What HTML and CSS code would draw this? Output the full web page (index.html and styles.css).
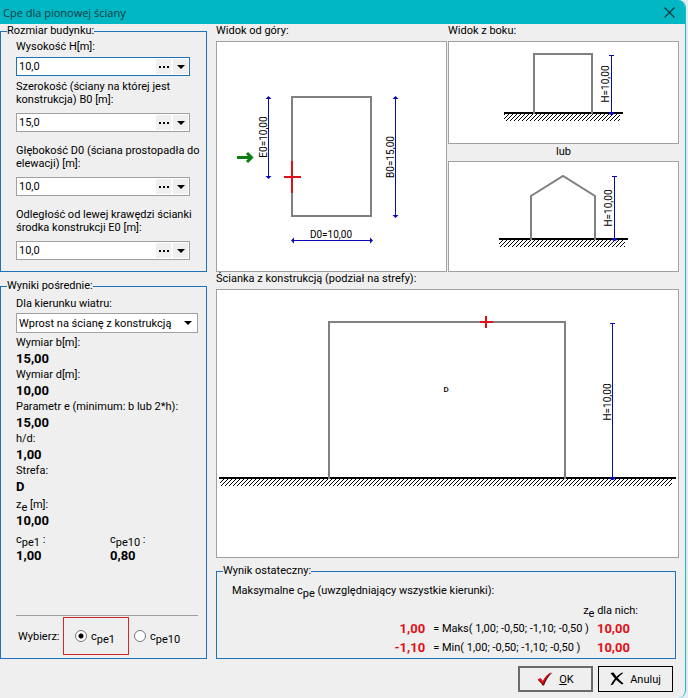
FILE: index.html
```
<!DOCTYPE html>
<html lang="pl">
<head>
  <meta charset="utf-8">
  <title>Cpe dla pionowej ściany</title>
  <link rel="stylesheet" href="styles.css">
</head>
<body>
  <div class="window">
    <header class="titlebar">
      <h1>Cpe dla pionowej ściany</h1>
      <button class="close" aria-label="Zamknij">
        <svg width="11" height="11" viewBox="0 0 11 11"><path d="M0.5 0.5L10.5 10.5M10.5 0.5L0.5 10.5" stroke="#12383c" stroke-width="1.2"/></svg>
      </button>
    </header>

    <main class="content">
      <div class="sidebar">
        <fieldset class="group size-group">
          <legend>Rozmiar budynku:</legend>
          <div class="field compact">
            <label for="height">Wysokość H[m]:</label>
            <div class="number active">
              <input id="height" type="text" value="10,0">
              <button class="more" aria-label="Kalkulator"></button>
              <button class="arrow" aria-label="Lista"></button>
            </div>
          </div>
          <div class="field">
            <label for="width">Szerokość (ściany na której jest konstrukcja) B0 [m]:</label>
            <div class="number">
              <input id="width" type="text" value="15,0">
              <button class="more" aria-label="Kalkulator"></button>
              <button class="arrow" aria-label="Lista"></button>
            </div>
          </div>
          <div class="field">
            <label for="depth">Głębokość D0 (ściana prostopadła do elewacji) [m]:</label>
            <div class="number">
              <input id="depth" type="text" value="10,0">
              <button class="more" aria-label="Kalkulator"></button>
              <button class="arrow" aria-label="Lista"></button>
            </div>
          </div>
          <div class="field">
            <label for="distance">Odległość od lewej krawędzi ścianki środka konstrukcji E0 [m]:</label>
            <div class="number">
              <input id="distance" type="text" value="10,0">
              <button class="more" aria-label="Kalkulator"></button>
              <button class="arrow" aria-label="Lista"></button>
            </div>
          </div>
        </fieldset>

        <fieldset class="group partial-group">
          <legend>Wyniki pośrednie:</legend>
          <label for="wind">Dla kierunku wiatru:</label>
          <div class="select">
            <select id="wind">
              <option>Wprost na ścianę z konstrukcją</option>
            </select>
          </div>
          <dl class="values">
            <dt>Wymiar b[m]:</dt>
            <dd>15,00</dd>
            <dt>Wymiar d[m]:</dt>
            <dd>10,00</dd>
            <dt>Parametr e (minimum: b lub 2*h):</dt>
            <dd>15,00</dd>
            <dt>h/d:</dt>
            <dd>1,00</dd>
            <dt>Strefa:</dt>
            <dd>D</dd>
          </dl>
          <dl class="values indexed">
            <dt>z<sub>e</sub> [m]:</dt>
            <dd>10,00</dd>
          </dl>
          <div class="pair">
            <dl class="values indexed">
              <dt>c<sub>pe1</sub> :</dt>
              <dd>1,00</dd>
            </dl>
            <dl class="values indexed">
              <dt>c<sub>pe10</sub> :</dt>
              <dd>0,80</dd>
            </dl>
          </div>
          <div class="choice">
            <span class="choice-title">Wybierz:</span>
            <label class="radio marked"><input type="radio" name="cpe" checked><span>c<sub>pe1</sub></span></label>
            <label class="radio"><input type="radio" name="cpe"><span>c<sub>pe10</sub></span></label>
          </div>
        </fieldset>
      </div>

      <div class="views">
        <div class="top-views">
          <section class="view">
            <h2>Widok od góry:</h2>
            <div class="panel">
              <svg viewBox="0 0 229 229">
                <defs>
                  <pattern id="hatch" width="4" height="4" patternUnits="userSpaceOnUse">
                    <path d="M-1 5L5 -1M-1 1L1 -1M3 5L5 3" stroke="#000" stroke-width="1"/>
                  </pattern>
                </defs>
                <rect class="wall" x="75" y="55" width="79" height="119"/>
                <path class="dim" d="M51.5 55V136M178.5 55V175M75 198.5H155"/>
                <path class="tip" d="M51.5 54l3 3h-6zM51.5 137l3-3h-6zM178.5 54l3 3h-6zM178.5 176l3-3h-6zM74 198.5l3-3v6zM156 198.5l-3-3v6z"/>
                <path class="mark" d="M67 135H84M75 119V151"/>
                <path d="M20 115.5H35M30 111l4.5 4.5l-4.5 4.5" fill="none" stroke="#0a7d10" stroke-width="3"/>
                <text class="dim-text" x="114" y="196">D0=10,00</text>
                <text class="dim-text" transform="translate(50 95) rotate(-90)">E0=10,00</text>
                <text class="dim-text" transform="translate(177 115) rotate(-90)">B0=15,00</text>
              </svg>
            </div>
          </section>
          <section class="view">
            <h2>Widok z boku:</h2>
            <div class="panel">
              <svg viewBox="0 0 229 101">
                <rect x="55" y="72" width="116" height="7" fill="url(#hatch)"/>
                <path class="ground" d="M55 71H174"/>
                <path class="wall" d="M85 72V12H143V72"/>
                <path class="dim" d="M162.5 13V71M160 13.5h5"/>
                <path class="tip" d="M160 70h5v2l-2 1h-1l-2-1z"/>
                <text class="dim-text" transform="translate(160 42) rotate(-90)">H=10,00</text>
              </svg>
            </div>
            <p class="or">lub</p>
            <div class="panel">
              <svg viewBox="0 0 229 109">
                <rect x="50" y="78" width="126" height="7" fill="url(#hatch)"/>
                <path class="ground" d="M50 77H179"/>
                <path class="wall" d="M82 78V34L114 14L146 34V78"/>
                <path class="dim" d="M165.5 14V77M163 14.5h5"/>
                <path class="tip" d="M163 76h5v2l-2 1h-1l-2-1z"/>
                <text class="dim-text" transform="translate(163 46) rotate(-90)">H=10,00</text>
              </svg>
            </div>
          </section>
        </div>

        <section class="view">
          <h2>Ścianka z konstrukcją (podział na strefy):</h2>
          <div class="panel">
            <svg viewBox="0 0 461 267">
              <rect x="3" y="189" width="452" height="7" fill="url(#hatch)"/>
              <path class="ground" d="M2 188H459"/>
              <path class="wall" d="M112 189V32H348V189"/>
              <path class="mark" d="M263 32H276M269 26V38"/>
              <path class="dim" d="M395.5 33V188M393 33.5h5"/>
              <path class="tip" d="M393 187h5v2l-2 1h-1l-2-1z"/>
              <text class="zone-text" x="229" y="102">D</text>
              <text class="dim-text" transform="translate(394 112) rotate(-90)">H=10,00</text>
            </svg>
          </div>
        </section>

        <fieldset class="group final-group">
          <legend>Wynik ostateczny:</legend>
          <p>Maksymalne c<sub>pe</sub> (uwzględniający wszystkie kierunki):</p>
          <table class="results">
            <thead>
              <tr><td></td><th colspan="2" scope="col">z<sub>e</sub> dla nich:</th></tr>
            </thead>
            <tbody>
              <tr>
                <td class="result">1,00</td>
                <td>= Maks( 1,00; -0,50; -1,10; -0,50 )</td>
                <td class="result">10,00</td>
              </tr>
              <tr>
                <td class="result">-1,10</td>
                <td>= Min( 1,00; -0,50; -1,10; -0,50 )</td>
                <td class="result">10,00</td>
              </tr>
            </tbody>
          </table>
        </fieldset>
      </div>
    </main>

    <footer class="actions">
      <button class="btn btn-default">
        <svg width="16" height="14" viewBox="0 0 16 14"><path d="M1 8.5L4 7L6 9.5C8 5.5 11 2 15.5 0.5C11.5 4 9 8 7 13.5H5.5C4.5 11.5 3 9.5 1 8.5Z" fill="#5a0a0a"/><path d="M0.5 7.5L3.5 6L5.7 9C8 4.5 11 1.5 14.5 0.2C11 3.5 8 7.5 6 12.5C4.5 10.5 3 8.5 0.5 7.5Z" fill="#e01018"/></svg>
        <span><u>O</u>K</span>
      </button>
      <button class="btn">
        <svg width="14" height="14" viewBox="0 0 14 14"><path d="M0.5 1L3.5 0.5C6 4 9 8 13.5 11.5L12 12.5C8 10 4 6 0.5 1Z" fill="#000"/><path d="M12 0.5L13.2 1C9 4 5.5 8 3 12.5L0.5 13.2C3 8 7 3.5 12 0.5Z" fill="#000"/></svg>
        <span>Anuluj</span>
      </button>
    </footer>
  </div>
</body>
</html>
```
FILE: styles.css
```
* {
  margin: 0;
  padding: 0;
  box-sizing: border-box;
}

body {
  font-family: Roboto, "Liberation Sans", sans-serif;
  font-size: 11px;
  line-height: 13px;
  color: #000;
  background: #e1edf0;
}

button, input, select {
  font: inherit;
  color: inherit;
}

h1, h2, th {
  font-size: inherit;
  font-weight: normal;
}

.window {
  min-height: 100vh;
  margin-right: 2px;
  background: #efefef;
  border-right: 1px solid #20b4bd;
  border-radius: 0 8px 8px 0;
  overflow: hidden;
}

.titlebar {
  display: flex;
  align-items: center;
  justify-content: space-between;
  height: 24px;
  padding: 0 10px 0 3px;
  background: #00b7c3;
  color: #0b3a40;
  font-family: "Open Sans", sans-serif;
}

.close {
  display: flex;
  background: none;
  border: none;
}

.content {
  display: grid;
  grid-template-columns: 207px 1fr;
  gap: 9px;
  padding-right: 6px;
}

/* group boxes */
.group {
  min-width: 0;
  border: 1px solid #1e72b8;
}

.group legend {
  margin-left: -9px;
  line-height: 14px;
}

.sidebar {
  display: flex;
  flex-direction: column;
  gap: 7px;
}

.size-group {
  padding: 2px 2px 11px 15px;
}

.field {
  margin-bottom: 12px;
}

.field:last-child {
  margin-bottom: 0;
}

.field label {
  display: block;
  margin-bottom: 7px;
}

.field.compact {
  margin-bottom: 4px;
}

.field.compact label {
  margin-bottom: 4px;
}

.number {
  display: flex;
  align-items: center;
  gap: 2px;
  height: 19px;
  margin-right: 14px;
  padding-right: 1px;
  background: #fff;
  border: 1px solid #a0a0a0;
}

.number.active {
  border-color: #1e72b8;
}

.number input {
  flex: 1;
  min-width: 0;
  padding-left: 2px;
  border: none;
  outline: none;
  background: none;
}

.number button {
  display: flex;
  align-items: center;
  justify-content: center;
  width: 15px;
  height: 15px;
  background: #efefef;
  border: none;
}

.more::before {
  content: "";
  width: 10px;
  height: 2px;
  background: repeating-linear-gradient(90deg, #000 0 2px, transparent 2px 4px);
}

.arrow::before,
.select::after {
  content: "";
  border: 4px solid transparent;
  border-top-color: #000;
  border-bottom: none;
}

.partial-group {
  flex: 1;
  display: flex;
  flex-direction: column;
  padding: 4px 8px 3px 15px;
}

.select {
  display: flex;
  align-items: center;
  height: 20px;
  margin: 3px 0 2px;
  padding-right: 5px;
  background: #fff;
  border: 1px solid #a0a0a0;
}

.select select {
  flex: 1;
  min-width: 0;
  padding-left: 2px;
  appearance: none;
  background: none;
  border: none;
  outline: none;
}

.values {
  line-height: 16px;
}

.values dd {
  font-size: 13px;
  font-weight: bold;
}

.values.indexed {
  margin-top: 2px;
}

sub {
  font-size: 11px;
  line-height: 0;
  vertical-align: -3px;
}

.pair {
  display: grid;
  grid-template-columns: 1fr 1fr;
  gap: 6px;
  margin-top: 1px;
}

.choice {
  display: flex;
  align-items: center;
  margin-top: auto;
  padding-top: 1px;
  border-top: 1px solid #a0a0a0;
}

.choice-title {
  width: 47px;
  padding-left: 2px;
}

.radio {
  display: flex;
  align-items: center;
  gap: 4px;
  height: 38px;
  padding: 0 5px;
}

.radio.marked {
  width: 66px;
  padding: 0 11px;
  border: 1px solid #d0282c;
}

.radio input {
  width: 12px;
  height: 12px;
  appearance: none;
  background: #fff;
  border: 1px solid #777;
  border-radius: 50%;
}

.radio input:checked {
  background: radial-gradient(circle, #000 0 2px, #fff 3px);
}

/* drawings */
.top-views {
  display: grid;
  grid-template-columns: 1fr 1fr;
  gap: 1px;
}

.view h2 {
  padding-bottom: 3px;
  line-height: 14px;
}

.panel {
  background: #fff;
  border: 1px solid #a0a0a0;
}

.panel svg {
  display: block;
  width: 100%;
  height: auto;
}

.or {
  padding: 1px 0 2px;
  text-align: center;
  line-height: 14px;
}

.wall {
  fill: none;
  stroke: #808080;
  stroke-width: 2;
}

.ground {
  stroke: #000;
  stroke-width: 2;
}

.dim {
  stroke: #0808b8;
}

.tip {
  fill: #0808b8;
}

.mark {
  stroke: #e01018;
  stroke-width: 2;
}

.dim-text {
  font-size: 10px;
  text-anchor: middle;
}

.zone-text {
  font-size: 8px;
  font-weight: 500;
  text-anchor: middle;
}

/* final result */
.final-group {
  margin: 6px 3px 0 0;
  padding: 6px 8px 1px 15px;
}

.results {
  margin: 5px 29px 0 auto;
  border-collapse: collapse;
}

.results th {
  height: 17px;
  text-align: right;
}

.results td {
  padding-right: 8px;
  white-space: nowrap;
}

.results tbody td {
  height: 19px;
}

.results .result {
  color: #e01018;
  font-size: 13px;
  font-weight: bold;
  text-align: right;
}

.actions {
  display: flex;
  justify-content: flex-end;
  gap: 5px;
  padding: 7px 12px 6px 0;
}

.btn {
  display: flex;
  align-items: center;
  justify-content: center;
  gap: 6px;
  width: 75px;
  height: 26px;
  background: #efefef;
  border: 1px solid #000;
}

.btn-default {
  border: 2px solid #6a6a6a;
}
```
